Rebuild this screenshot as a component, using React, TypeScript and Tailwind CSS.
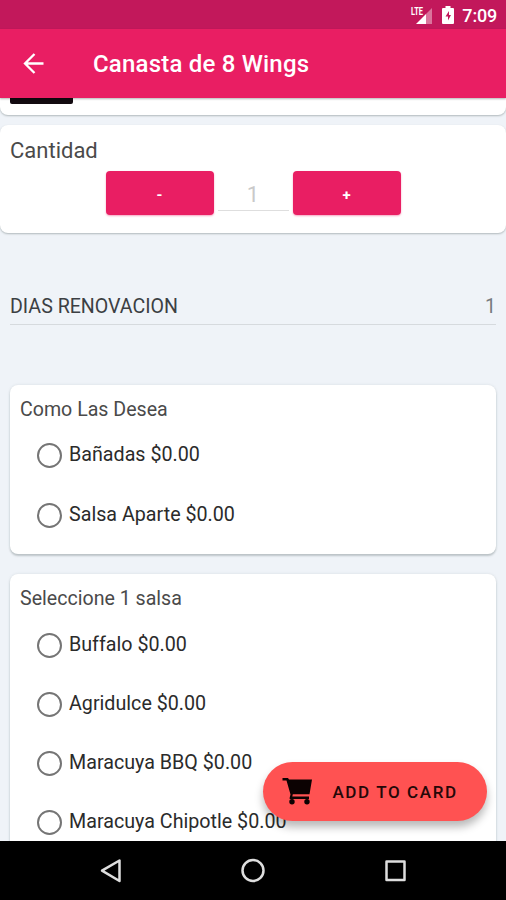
import React from "react";

function Option({ label }: { label: string }) {
  return (
    <label className="flex h-[59.2px] items-center pl-[27px]">
      <span className="h-[25px] w-[25px] shrink-0 rounded-full border-[2px] border-[#757575]" />
      <span className="ml-[7px] whitespace-nowrap pb-px text-[19.7px] leading-[24px] text-[#2b2b2b]">
        {label}
      </span>
    </label>
  );
}

function OptionCard({ title, options, className }: { title: string; options: string[]; className: string }) {
  return (
    <section
      className={
        "mx-[10px] shrink-0 rounded-[8px] bg-white pt-[13px] shadow-[0_2px_2px_rgba(60,75,75,0.25),0_0_3px_rgba(60,75,75,0.12)] " +
        className
      }
    >
      <h2 className="pl-[10px] text-[19.6px] leading-[24px] text-[#4a4a4a]">{title}</h2>
      <div className="mt-[4.4px]">
        {options.map((o) => (
          <Option key={o} label={o} />
        ))}
      </div>
    </section>
  );
}

function StatusBar() {
  return (
    <div className="flex h-[29px] shrink-0 items-center justify-end bg-[#c2185b] pr-[9px] text-white">
      <svg className="h-[22px] w-[24px]" viewBox="0 0 24 22">
        <path d="M23 4V20H17V10Z" fill="#fff" fillOpacity=".4" />
        <path d="M17 10V20H7Z" fill="#fff" />
        <text x="2" y="10.500" fontSize="10" fontWeight="700" textLength="12" lengthAdjust="spacingAndGlyphs" fill="#fff" fontFamily="Roboto, sans-serif">
          LTE
        </text>
      </svg>
      <svg className="ml-[9px] mr-[8px] h-[18px] w-[12px]" viewBox="0 0 12 18">
        <path d="M3.5 0h5v2H11q1 0 1 1v14q0 1-1 1H1q-1 0-1-1V3q0-1 1-1h2.500Z" fill="#fff" />
        <path d="M7 5 3.500 10.500h2.500V14.500L9 9H7Z" fill="#c2185b" />
      </svg>
      <span className="mt-[2px] text-[18px] font-medium leading-[22px] tracking-[-0.2px]">7:09</span>
    </div>
  );
}

export default function App() {
  return (
    <div className="relative flex h-[900px] w-[506px] flex-col overflow-hidden bg-[#eff3f8] font-[Roboto,sans-serif]">
      <StatusBar />
      <header className="z-10 flex h-[69px] shrink-0 items-center bg-[#e91e63] pl-[23px] text-white shadow-[0_1px_2px_rgba(0,0,0,0.3)]">
        <svg className="h-[21px] w-[21px]" viewBox="0 0 21 21" fill="none" stroke="#fff" strokeWidth="2.3">
          <path d="M20.500 10.500H2M11.500 1 2 10.500l9.500 9.500" />
        </svg>
        <h1 className="ml-[49px] text-[24px] font-medium leading-[28px] tracking-[0.2px]">Canasta de 8 Wings</h1>
      </header>

      <main className="flex min-h-0 flex-1 flex-col overflow-hidden">
        <div className="h-[17px] shrink-0 rounded-b-[8px] bg-white pl-[10px] shadow-[0_1px_2px_rgba(60,75,75,0.35)]">
          <div className="h-[6px] w-[63px] rounded-b-[2px] bg-[#120a10]" />
        </div>

        <section className="mt-[10px] h-[108px] shrink-0 rounded-[8px] bg-white pt-[12px] shadow-[0_1px_2px_rgba(60,75,75,0.35)]">
          <h2 className="pl-[10px] text-[22px] leading-[28px] text-[#4a4a4a]">Cantidad</h2>
          <div className="mt-[6px] flex justify-center gap-[4px]">
            <button className="h-[44px] w-[108px] rounded-[4px] bg-[#e91e63] pt-[4px] text-[15px] font-bold text-white shadow-[0_1px_2px_rgba(233,30,99,0.4)]">
              -
            </button>
            <div className="flex h-[40px] w-[71px] items-center justify-center border-b border-[#dedede] pt-[7px] text-[22px] text-[#c9c9c9]">
              1
            </div>
            <button className="h-[44px] w-[108px] rounded-[4px] bg-[#e91e63] pt-[4px] text-[15px] font-bold text-white shadow-[0_1px_2px_rgba(233,30,99,0.4)]">
              +
            </button>
          </div>
        </section>

        <div className="mx-[10px] mt-[60px] flex h-[32px] shrink-0 justify-between border-b border-[#d6dade] text-[19.6px] leading-[28px]">
          <span className="text-[#3c3f43]">DIAS RENOVACION</span>
          <span className="text-[#777b80]">1</span>
        </div>

        <OptionCard
          className="mt-[60px] h-[169px]"
          title="Como Las Desea"
          options={["Bañadas $0.00", "Salsa Aparte $0.00"]}
        />
        <OptionCard
          className="mt-[20.3px] h-[300px]"
          title="Seleccione 1 salsa"
          options={["Buffalo $0.00", "Agridulce $0.00", "Maracuya BBQ $0.00", "Maracuya Chipotle $0.00"]}
        />
      </main>

      <button className="absolute bottom-[79px] right-[19px] flex h-[59px] w-[224px] items-center rounded-full bg-[#ff5252] pl-[19px] text-[#250808] shadow-[0_6px_8px_rgba(0,0,0,0.28)]">
        <svg className="h-[27px] w-[31px]" viewBox="0 0 31 27" fill="#0c0202">
          <path d="M.5 0H6L7 1.500H30L27.500 16.200H10.800L10.300 18.500H27V21H8Q7.500 21 7.600 20L8.500 16.500 4.500 2.500H.5Z" />
          <circle cx="10" cy="23.800" r="2.700" />
          <circle cx="25" cy="23.800" r="2.700" />
        </svg>
        <span className="ml-[19.500px] mt-[2px] whitespace-nowrap text-[17px] font-medium tracking-[1.6px]">ADD TO CARD</span>
      </button>

      <nav className="flex h-[59px] shrink-0 items-center bg-black">
        <svg className="h-[59px] w-[506px]" viewBox="0 0 506 59" fill="none" stroke="#dedede" strokeWidth="2.500" strokeLinejoin="round">
          <path d="M119.500 19.500V40L102 29.700Z" />
          <circle cx="253" cy="29.500" r="10.500" />
          <rect x="386.500" y="20.500" width="18" height="18.500" />
        </svg>
      </nav>
    </div>
  );
}
